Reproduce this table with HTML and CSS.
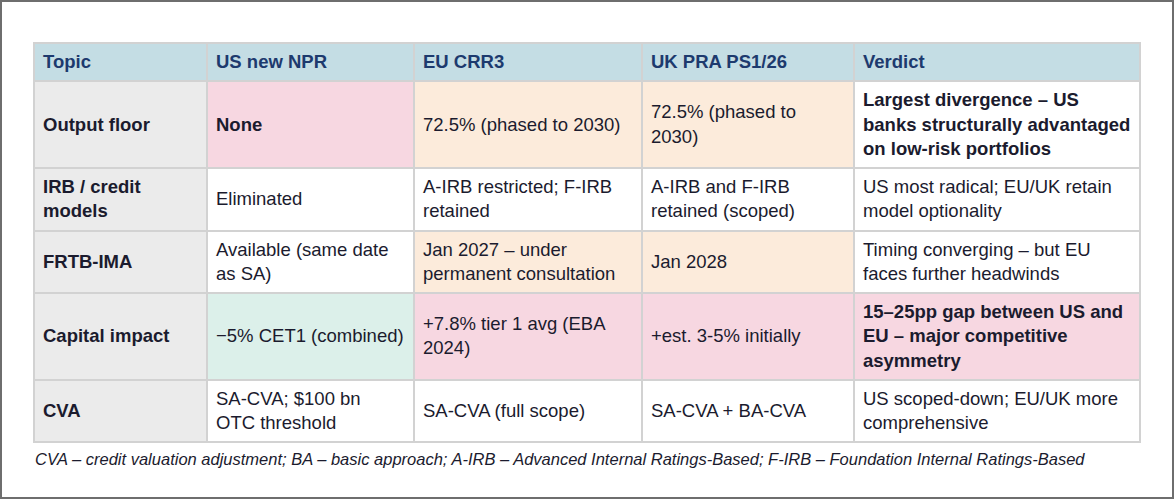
FILE: index.html
```html
<!DOCTYPE html>
<html>
<head>
<meta charset="utf-8">
<link rel="stylesheet" href="styles.css">
</head>
<body>
<div class="frame">
  <table class="grid">
    <colgroup>
      <col class="c1"><col class="c2"><col class="c3"><col class="c4"><col class="c5">
    </colgroup>
    <thead>
      <tr>
        <th>Topic</th><th>US new NPR</th><th>EU CRR3</th><th>UK PRA PS1/26</th><th>Verdict</th>
      </tr>
    </thead>
    <tbody>
      <tr>
        <td class="topic">Output floor</td>
        <td class="pink strong">None</td>
        <td class="peach">72.5% (phased to 2030)</td>
        <td class="peach">72.5% (phased to 2030)</td>
        <td class="strong">Largest divergence – US banks structurally advantaged on low-risk portfolios</td>
      </tr>
      <tr>
        <td class="topic">IRB / credit models</td>
        <td>Eliminated</td>
        <td>A-IRB restricted; F-IRB retained</td>
        <td>A-IRB and F-IRB retained (scoped)</td>
        <td>US most radical; EU/UK retain model optionality</td>
      </tr>
      <tr>
        <td class="topic">FRTB-IMA</td>
        <td>Available (same date as SA)</td>
        <td class="peach">Jan 2027 – under permanent consultation</td>
        <td class="peach">Jan 2028</td>
        <td>Timing converging – but EU faces further headwinds</td>
      </tr>
      <tr>
        <td class="topic">Capital impact</td>
        <td class="mint">−5% CET1 (combined)</td>
        <td class="pink">+7.8% tier 1 avg (EBA 2024)</td>
        <td class="pink">+est. 3-5% initially</td>
        <td class="pink strong">15–25pp gap between US and EU – major competitive asymmetry</td>
      </tr>
      <tr>
        <td class="topic">CVA</td>
        <td>SA-CVA; $100 bn OTC threshold</td>
        <td>SA-CVA (full scope)</td>
        <td>SA-CVA + BA-CVA</td>
        <td>US scoped-down; EU/UK more comprehensive</td>
      </tr>
    </tbody>
  </table>
  <p class="note">CVA – credit valuation adjustment; BA – basic approach; A-IRB – Advanced Internal Ratings-Based; F-IRB – Foundation Internal Ratings-Based</p>
</div>
</body>
</html>
```
FILE: styles.css
```css
html, body {
  margin: 0;
  padding: 0;
  background: #ffffff;
}
.frame {
  box-sizing: border-box;
  width: 1174px;
  height: 499px;
  border: 2px solid #6e6e6e;
  padding: 40px 0 0 31px;
  font-family: "Liberation Sans", Arial, sans-serif;
  color: #1b1b2e;
}
.grid {
  border-collapse: collapse;
  table-layout: fixed;
  width: 1106px;
  font-size: 18.5px;
  line-height: 24.25px;
}
.c1 { width: 173px; }
.c2 { width: 207px; }
.c3 { width: 228px; }
.c4 { width: 212px; }
.c5 { width: 286px; }
.grid th, .grid td {
  border: 2px solid #d2d2d2;
  padding: 6px 9px 6px 8px;
  text-align: left;
  vertical-align: middle;
}
.grid th:last-child, .grid td:last-child {
  padding-right: 4px;
}
.grid th {
  background: #c4dde4;
  color: #1d3a6e;
  font-weight: bold;
}
.grid td {
  background: #ffffff;
}
.grid td.topic {
  background: #ebebeb;
  font-weight: bold;
}
.grid td.pink { background: #f7d7e1; }
.grid td.peach { background: #fcebdb; }
.grid td.mint { background: #dcf0ea; }
.grid td.strong { font-weight: bold; }
.note {
  margin: 6px 0 0 2px;
  font-size: 16.5px;
  line-height: 20px;
  font-style: italic;
  color: #1b1b2e;
}
```
